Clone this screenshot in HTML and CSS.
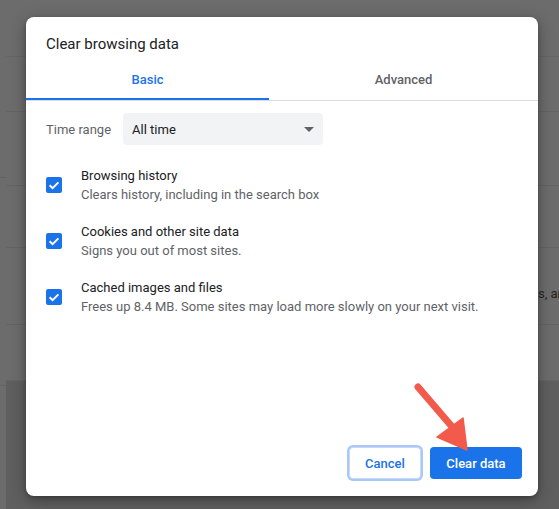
FILE: index.html
```html
<!DOCTYPE html>
<html lang="en">
<head>
<meta charset="utf-8">
<title>Clear browsing data</title>
<link rel="stylesheet" href="styles.css">
</head>
<body>
  <!-- dimmed settings page behind the dialog -->
  <div class="backdrop">
    <div class="side">
      <div class="side-row r1"></div>
      <div class="side-row r2"></div>
    </div>
    <div class="page">
      <div class="page-row p1"></div>
      <div class="page-row p2"></div>
      <div class="page-row p3"></div>
      <div class="page-row p4"></div>
      <div class="page-row p5"><span class="page-text">s, an</span></div>
      <div class="page-row p6"></div>
      <div class="page-foot"></div>
    </div>
  </div>

  <div class="dialog" role="dialog" aria-label="Clear browsing data">
    <h1 class="dialog-title">Clear browsing data</h1>

    <div class="tabs">
      <div class="tab tab-basic active">Basic</div>
      <div class="tab">Advanced</div>
    </div>

    <div class="dialog-body">
      <div class="range">
        <span class="range-label">Time range</span>
        <div class="select">
          <span>All time</span>
          <svg class="caret" width="10" height="5" viewBox="0 0 10 5"><path d="M0 0h10L5 5z" fill="#5f6368"/></svg>
        </div>
      </div>

      <div class="option">
        <span class="check"><svg width="16" height="16" viewBox="0 0 16 16"><path d="M3.6 8.2l3 3 5.8-5.8" fill="none" stroke="#fff" stroke-width="2"/></svg></span>
        <div class="option-text">
          <div class="option-title">Browsing history</div>
          <div class="option-sub">Clears history, including in the search box</div>
        </div>
      </div>

      <div class="option">
        <span class="check"><svg width="16" height="16" viewBox="0 0 16 16"><path d="M3.6 8.2l3 3 5.8-5.8" fill="none" stroke="#fff" stroke-width="2"/></svg></span>
        <div class="option-text">
          <div class="option-title">Cookies and other site data</div>
          <div class="option-sub">Signs you out of most sites.</div>
        </div>
      </div>

      <div class="option">
        <span class="check"><svg width="16" height="16" viewBox="0 0 16 16"><path d="M3.6 8.2l3 3 5.8-5.8" fill="none" stroke="#fff" stroke-width="2"/></svg></span>
        <div class="option-text">
          <div class="option-title">Cached images and files</div>
          <div class="option-sub">Frees up 8.4 MB. Some sites may load more slowly on your next visit.</div>
        </div>
      </div>
    </div>

    <div class="actions">
      <button class="btn btn-cancel">Cancel</button>
      <button class="btn btn-primary">Clear data</button>
    </div>
  </div>

  <!-- callout arrow pointing at the primary button -->
  <svg class="callout" width="70" height="80" viewBox="0 0 70 80">
    <line x1="8" y1="9" x2="44" y2="51" stroke="#f25a4b" stroke-width="7" stroke-linecap="round"/>
    <path d="M27 59 L53 40 L57 72 Z" fill="#f25a4b" stroke="#f25a4b" stroke-width="1.5" stroke-linejoin="round"/>
  </svg>
</body>
</html>
```

FILE: styles.css
```css
* { box-sizing: border-box; }

html, body {
  margin: 0;
  height: 100%;
}

body {
  width: 559px;
  height: 509px;
  overflow: hidden;
  position: relative;
  background: #6c6c6c;
  font-family: Roboto, "Noto Sans", Arial, sans-serif;
  color: #202124;
}

/* ---------- dimmed page ---------- */
.backdrop {
  display: flex;
  height: 100%;
}

.side {
  width: 6px;
  display: flex;
  flex-direction: column;
}
.side-row { border-bottom: 1px solid #636363; }
.side-row.r1 { height: 178px; }
.side-row.r2 { height: 208px; }

.page {
  flex: 1;
  display: flex;
  flex-direction: column;
}
.page-row {
  border-bottom: 1px solid #646464;
  display: flex;
  align-items: center;
}
.page-row.p1 { height: 57px; border-bottom-color: #666; }
.page-row.p2 { height: 55px; }
.page-row.p3 { height: 74px; }
.page-row.p4 { height: 62px; }
.page-row.p5 { height: 77px; }
.page-row.p6 { height: 56px; }
.page-text {
  margin: 14px 0 0 532px;
  width: 21px;
  overflow: hidden;
  white-space: nowrap;
  font-size: 13px;
  color: #262626;
}
.page-foot {
  flex: 1;
  background: #5f5f5f;
}

/* ---------- dialog ---------- */
.dialog {
  position: absolute;
  left: 26px;
  top: 17px;
  width: 512px;
  height: 479px;
  background: #fff;
  border-radius: 8px;
  box-shadow: 0 4px 16px rgba(0, 0, 0, 0.32), 0 2px 4px rgba(0, 0, 0, 0.2);
  display: flex;
  flex-direction: column;
}

.dialog-title {
  margin: 0;
  padding: 19px 20px 0;
  height: 43px;
  font-size: 15px;
  font-weight: 400;
  line-height: 16px;
  color: #202124;
}

.tabs {
  display: flex;
  border-bottom: 1px solid #dadce0;
}
.tab {
  flex: 1;
  height: 40px;
  display: flex;
  align-items: center;
  justify-content: center;
  font-size: 13px;
  font-weight: 500;
  color: #5f6368;
  padding-top: 1px;
  border-bottom: 2px solid transparent;
}
.tab-basic { flex: 0 0 243px; }
.tab.active {
  color: #1a73e8;
  border-bottom-color: #1a73e8;
}

.dialog-body {
  flex: 1;
  padding: 12px 20px 0;
}

.range {
  display: flex;
  align-items: center;
  gap: 12px;
  height: 32px;
}
.range-label {
  font-size: 13px;
  color: #5f6368;
}
.select {
  width: 200px;
  height: 32px;
  background: #f1f3f4;
  border-radius: 4px;
  display: flex;
  align-items: center;
  justify-content: space-between;
  padding: 0 9px 0 9px;
  font-size: 13px;
  color: #202124;
}

.option {
  display: flex;
  align-items: center;
  gap: 19px;
  height: 56px;
}
.range + .option { margin-top: 12px; }

.check {
  width: 16px;
  height: 16px;
  border-radius: 2px;
  background: #1a73e8;
  display: flex;
  flex-shrink: 0;
}

.option-text {
  font-size: 13px;
  line-height: 19px;
  margin-top: -1px;
}
.option-title { color: #202124; }
.option-sub { color: #5f6368; }

.actions {
  display: flex;
  justify-content: flex-end;
  gap: 9px;
  padding: 0 16px 17px;
}

.btn {
  height: 32px;
  border-radius: 4px;
  font-family: inherit;
  font-size: 13px;
  font-weight: 500;
  cursor: pointer;
}
.btn-cancel {
  width: 72px;
  background: #fff;
  color: #1a73e8;
  border: 1px solid #c5d9fb;
  box-shadow: 0 0 0 2px #a9c8f8;
}
.btn-primary {
  width: 92px;
  background: #1a73e8;
  color: #fff;
  border: none;
}

.callout {
  position: absolute;
  left: 410px;
  top: 378px;
}
```
